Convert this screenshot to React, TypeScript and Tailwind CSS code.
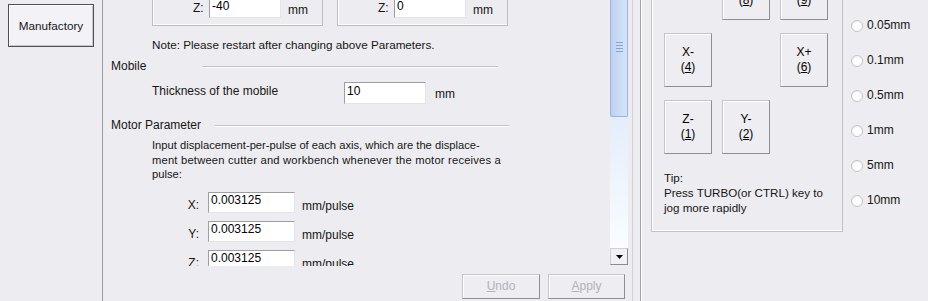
import React from 'react'

const axes = ['X', 'Y', 'Z']
const steps = ['0.05mm', '0.1mm', '0.5mm', '1mm', '5mm', '10mm']

const jogKeys = [
  { label: '', key: '' },
  { label: 'Y+', key: '8' },
  { label: 'Z+', key: '9' },
  { label: 'X-', key: '4' },
  { label: '', key: '' },
  { label: 'X+', key: '6' },
  { label: 'Z-', key: '1' },
  { label: 'Y-', key: '2' },
  { label: '', key: '' },
]

function Field({ value, className }: { value: string; className: string }) {
  return (
    <input
      readOnly
      defaultValue={value}
      className={`bg-white pl-[2px] pb-[4px] text-[12px] text-black outline-none border-t border-l border-t-[#9E9DA3] border-l-[#9E9DA3] border-r border-b border-r-[#E4E3E8] border-b-[#E4E3E8] ${className}`}
    />
  )
}

function SectionTitle({ title, lineStart, lineEnd }: { title: string; lineStart: number; lineEnd: number }) {
  return (
    <div className="flex items-center h-[15px] pl-[8px]">
      <span className="leading-[15px]">{title}</span>
      <div style={{ marginLeft: lineStart, width: lineEnd }} className="h-[2px] border-t border-t-[#C3C2C8] border-b border-b-white" />
    </div>
  )
}

function TopBox({ value }: { value: string }) {
  return (
    <div className="w-[171px] h-[26px] border-x border-b border-[#BDBCC2] shadow-[inset_1px_0_0_#fff,inset_0_-1px_0_#fff] flex items-start pl-[40px]">
      <span className="w-[16px] leading-[15px] mt-[1px]">Z:</span>
      <Field value={value} className="w-[72px] h-[21px] -mt-[3px]" />
      <span className="ml-[7px] mt-[3px] leading-[15px]">mm</span>
    </div>
  )
}

function WinButton({ children, className, disabled }: { children: React.ReactNode; className: string; disabled?: boolean }) {
  return (
    <button
      className={`bg-[#EEEDF2] border border-[#C6C5CB] border-r-[#8F8E94] border-b-[#8F8E94] shadow-[inset_1px_1px_0_#fff] flex flex-col items-center justify-center leading-[15px] ${disabled ? 'text-[#B3B2B8]' : 'text-black'} ${className}`}
    >
      {children}
    </button>
  )
}

export default function App() {
  return (
    <div className="w-[928px] h-[301px] overflow-hidden flex bg-[#EDECF0] text-[12px] text-[#161616] font-['Liberation_Sans',Arial,sans-serif]">
      {/* left nav */}
      <div className="w-[102px] shrink-0 pt-[4px] pl-[8px]">
        <button className="w-[86px] h-[43px] bg-[#F3F2F6] border border-[#4F4F55] shadow-[inset_1px_1px_0_#fff,inset_-1px_-1px_0_#C9C8CE] text-[11.7px]">
          Manufactory
        </button>
      </div>
      <div className="w-px shrink-0 bg-[#9E9DA3]" />

      {/* settings column */}
      <div className="w-[525px] shrink-0 flex flex-col">
        <div className="flex h-[266px]">
          <div className="w-[507px] overflow-hidden flex flex-col">
            <div className="flex gap-[14px] pl-[49px]">
              <TopBox value="-40" />
              <TopBox value="0" />
            </div>
            <div className="pl-[49px] mt-[11px] leading-[15px] text-[11.7px]">Note: Please restart after changing above Parameters.</div>

            <div className="mt-[7px]">
              <SectionTitle title="Mobile" lineStart={56} lineEnd={296} />
            </div>
            <div className="flex items-start pl-[49px] mt-[8px] h-[22px]">
              <span className="w-[192px] leading-[15px] mt-[2px]">Thickness of the mobile</span>
              <Field value="10" className="w-[82px] h-[22px]" />
              <span className="ml-[9px] mt-[5px] leading-[15px]">mm</span>
            </div>

            <div className="mt-[14px]">
              <SectionTitle title="Motor Parameter" lineStart={14} lineEnd={294} />
            </div>
            <p className="pl-[49px] mt-[5px] leading-[14.5px] text-[11.2px]">
              Input displacement-per-pulse of each axis, which are the displace-
              <br />
              <span className="tracking-[0.2px]">ment between cutter and workbench whenever the motor receives a</span>
              <br />
              pulse:
            </p>
            <div className="flex flex-col gap-[8px] mt-[10px] pl-[49px]">
              {axes.map(a => (
                <div key={a} className="flex items-end h-[21px]">
                  <span className="w-[48px] text-right leading-[15px] pr-[1px]">{a}:</span>
                  <Field value="0.003125" className="ml-[8px] w-[87px] h-[21px]" />
                  <span className="ml-[7px] leading-[15px] -mb-[1px]">mm/pulse</span>
                </div>
              ))}
            </div>
          </div>

          {/* scrollbar */}
          <div className="w-[18px] flex flex-col">
            <div className="h-[117px] border border-t-0 border-[#9DB3DA] rounded-b-[2px] bg-gradient-to-r from-[#BDD1F1] to-[#D6E4F9] flex items-center justify-center pb-[22px]">
              <div className="flex flex-col gap-[2px]">
                <div className="w-[7px] h-px bg-[#8DA4CC]" />
                <div className="w-[7px] h-px bg-[#8DA4CC]" />
                <div className="w-[7px] h-px bg-[#8DA4CC]" />
                <div className="w-[7px] h-px bg-[#8DA4CC]" />
              </div>
            </div>
            <div className="flex-1 bg-gradient-to-b from-[#E4EDFB] to-[#FAFCFF]" />
            <div className="h-[17px] bg-[#F1F0F4] border border-[#D0CFD5] border-r-[#8C8B91] border-b-[#8C8B91] flex items-center justify-center">
              <svg width="7" height="4" viewBox="0 0 7 4">
                <path d="M0 0h7L3.5 4z" fill="#000" />
              </svg>
            </div>
            <div className="h-px" />
          </div>
        </div>

        <div className="flex justify-end gap-[8px] pr-[3px] pt-[8px]">
          <WinButton disabled className="w-[78px] h-[25px]">
            <span><span className="underline">U</span>ndo</span>
          </WinButton>
          <WinButton disabled className="w-[77px] h-[25px]">
            <span><span className="underline">A</span>pply</span>
          </WinButton>
        </div>
      </div>

      {/* divider lines */}
      <div className="w-[4px] shrink-0" />
      <div className="w-px shrink-0 bg-[#D2D1D7]" />
      <div className="w-[7px] shrink-0" />
      <div className="w-px shrink-0 bg-[#A3A2A8]" />
      <div className="w-px shrink-0 bg-white" />

      {/* jog panel */}
      <div className="flex pl-[9px]">
        <div className="w-[192px] h-[232px] border-x border-b border-[#C3C2C8] shadow-[inset_1px_0_0_#fff,inset_0_-1px_0_#fff] pl-[12px]">
          <div className="grid grid-cols-[48px_48px_48px] auto-rows-[54px] gap-x-[10px] gap-y-[13px] -mt-[34px]">
            {jogKeys.map((k, i) =>
              k.key ? (
                <WinButton key={i} className="w-[48px] h-[54px]">
                  <span>{k.label}</span>
                  <span>(<span className="underline">{k.key}</span>)</span>
                </WinButton>
              ) : (
                <div key={i} />
              )
            )}
          </div>
          <div className="mt-[16px] leading-[15px] text-[11.6px]">
            Tip:
            <br />
            Press TURBO(or CTRL) key to
            <br />
            jog more rapidly
          </div>
        </div>

        <div className="ml-[8px] pt-[8px] flex flex-col">
          {steps.map(s => (
            <label key={s} className="h-[35px] flex items-center gap-[4px]">
              <span className="w-[12px] h-[12px] rounded-full border border-[#C4C3C9] bg-[radial-gradient(circle_at_60%_60%,#ffffff_45%,#E4E3E8)]" />
              <span className="leading-[15px]">{s}</span>
            </label>
          ))}
        </div>
      </div>
    </div>
  )
}
